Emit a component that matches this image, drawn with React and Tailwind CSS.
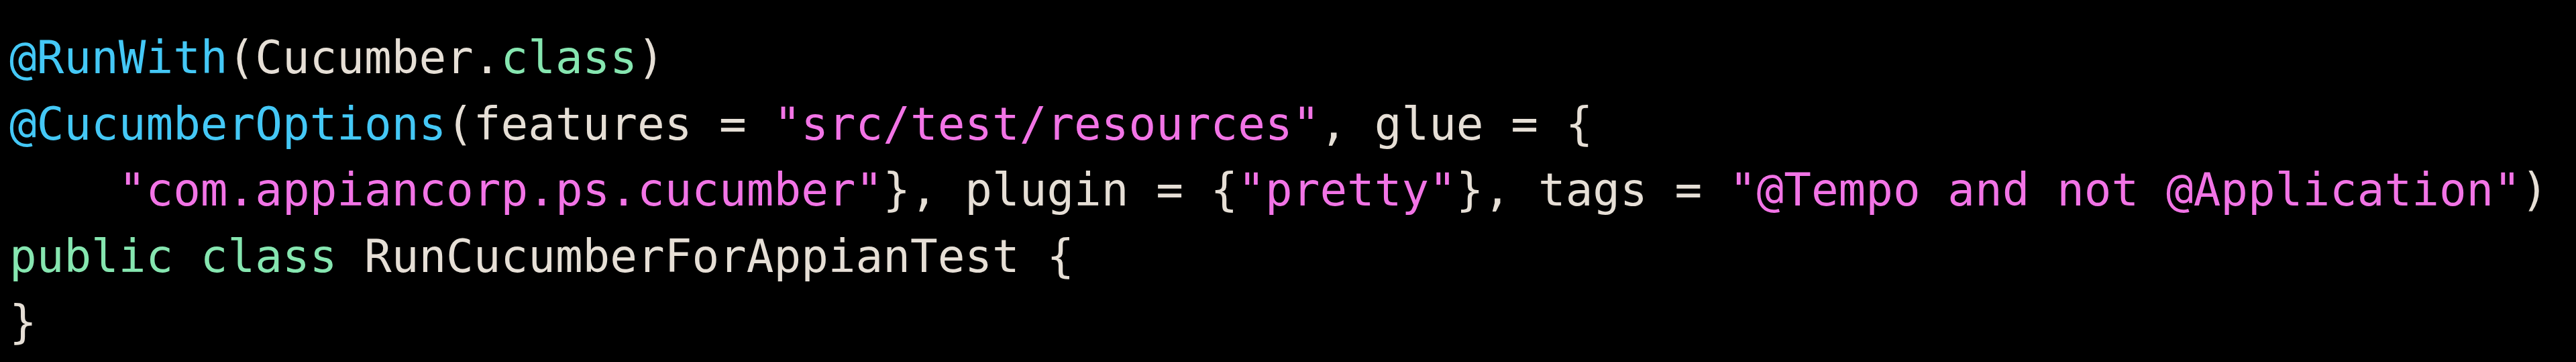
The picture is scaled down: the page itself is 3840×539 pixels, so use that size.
const KW = 'text-[#44c8f6]'
const GR = 'text-[#86e6b0]'
const STR = 'text-[#f274e6]'

const lines = [
  [
    ['@RunWith', KW],
    ['(Cucumber.'],
    ['class', GR],
    [')'],
  ],
  [
    ['@CucumberOptions', KW],
    ['(features = '],
    ['"src/test/resources"', STR],
    [', glue = {'],
  ],
  [
    ['    '],
    ['"com.appiancorp.ps.cucumber"', STR],
    ['}, plugin = {'],
    ['"pretty"', STR],
    ['}, tags = '],
    ['"@Tempo and not @Application"', STR],
    [')'],
  ],
  [
    ['public class', GR],
    [' RunCucumberForAppianTest {'],
  ],
  [['}']],
]

export default function App() {
  return (
    <div className="h-[539px] w-full overflow-hidden bg-black pl-[14px] pt-[37px]">
      <pre className="font-['DejaVu_Sans_Mono',monospace] text-[67.6px] leading-[98.6px] text-[#e6dfd6]">
        {lines.map((line, i) => (
          <div key={i}>
            {line.map(([t, c], j) => (
              <span key={j} className={c}>
                {t}
              </span>
            ))}
          </div>
        ))}
      </pre>
    </div>
  )
}
